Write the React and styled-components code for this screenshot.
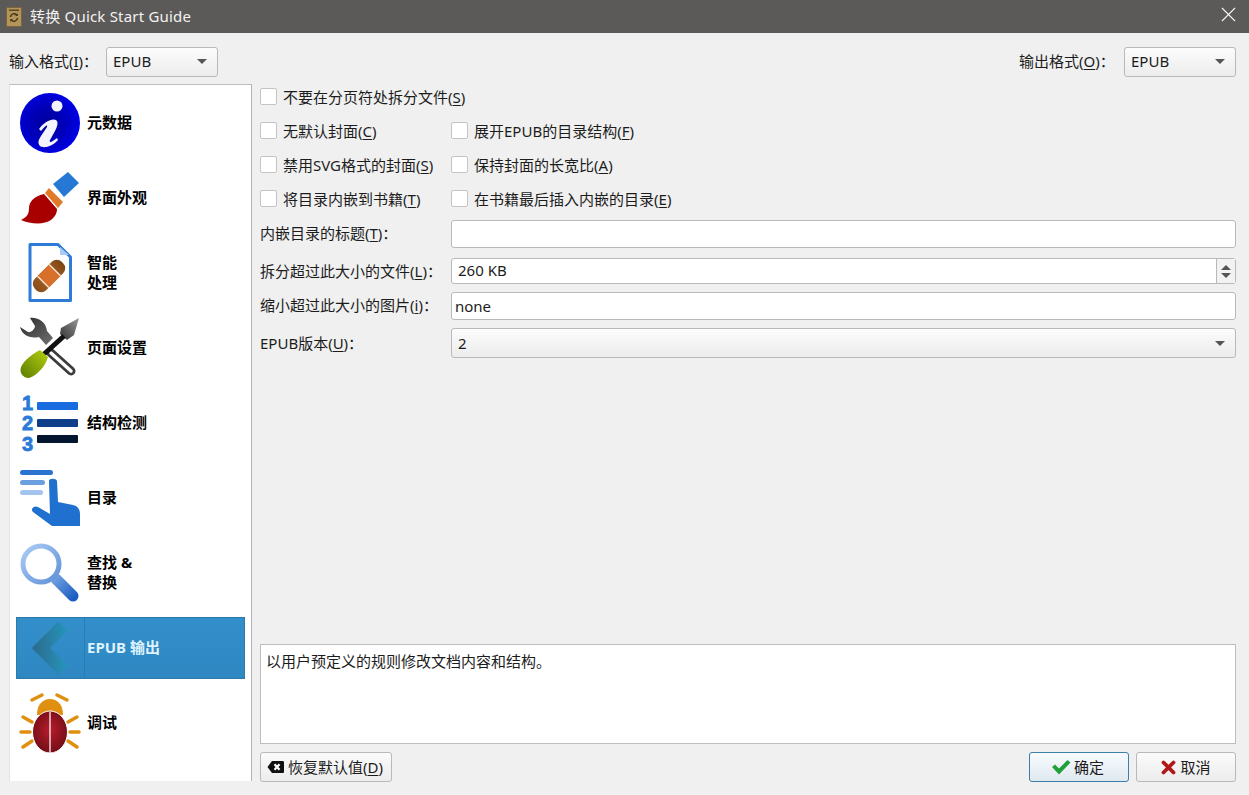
import React from 'react';
import styled, { createGlobalStyle } from 'styled-components';
import { X } from 'lucide-react';

const GlobalStyle = createGlobalStyle`
  html, body {
    margin: 0;
    padding: 0;
    background: #f0f0f0;
  }
  body {
    font-family: "Noto Sans", "Noto Sans CJK SC", sans-serif;
    font-size: 15px;
    color: #1c1c1c;
  }
  svg {
    overflow: visible;
    display: block;
  }
`;

const Window = styled.div`
  width: 1249px;
  height: 795px;
  display: flex;
  flex-direction: column;
  overflow: hidden;
  background: #f0f0f0;
`;

const TitleBar = styled.div`
  height: 33px;
  flex: none;
  display: flex;
  align-items: center;
  padding: 0 8px 0 6px;
  background: #5c5a58;
  color: #f2f2f2;
  font-size: 15px;
`;

const TitleText = styled.span`
  flex: 1;
  margin-left: 8px;
  letter-spacing: 0.2px;
  line-height: 1;
`;

const CloseIcon = styled(X)`
  margin-top: -5px;
`;

const FormatBar = styled.div`
  height: 30px;
  flex: none;
  margin-top: 14px;
  padding: 0 13px 0 9px;
  display: flex;
  align-items: center;
  justify-content: space-between;
`;

const FormatGroup = styled.div`
  display: flex;
  align-items: center;
`;

const FormatLabel = styled.span`
  width: ${(p) => p.$width};
  margin-top: -4px;
  white-space: nowrap;
`;

const Combo = styled.div`
  box-sizing: border-box;
  width: ${(p) => p.$width || '112px'};
  height: 30px;
  padding: 0 10px ${(p) => (p.$lift ? '2px' : '0')} 6px;
  display: flex;
  align-items: center;
  justify-content: space-between;
  border: 1px solid #b9b9b9;
  border-radius: 3px;
  background: linear-gradient(#fcfcfc, #ececec);
  line-height: 26px;
`;

const ComboArrow = styled.span`
  width: 0;
  height: 0;
  border-left: 5px solid transparent;
  border-right: 5px solid transparent;
  border-top: 5px solid #555;
`;

const Body = styled.div`
  flex: none;
  margin-top: 7px;
  padding-left: 9px;
  display: flex;
`;

const Sidebar = styled.nav`
  box-sizing: border-box;
  width: 243px;
  height: 697px;
  padding: 7px 6px 0 6px;
  display: flex;
  flex-direction: column;
  gap: 13px;
  background: #fff;
  border-top: 1px solid #bdbdbd;
  border-left: 1px solid #e4e4e4;
  border-right: 1px solid #b4b4b4;
`;

const NavItem = styled.div`
  box-sizing: border-box;
  height: 62px;
  flex: none;
  display: flex;
  align-items: center;
  font-weight: 700;
  line-height: 20px;
  color: ${(p) => (p.$active ? '#dff3ff' : '#000')};
  background: ${(p) => (p.$active ? 'linear-gradient(#338fcb, #2e87c1)' : 'transparent')};
  outline: ${(p) => (p.$active ? '1px solid #2c7aa9' : 'none')};
  outline-offset: -1px;
`;

const NavIcon = styled.div`
  box-sizing: border-box;
  width: 69px;
  height: 100%;
  flex: none;
  padding-left: 4px;
  display: flex;
  align-items: center;
  border-right: 1px solid ${(p) => (p.$active ? '#2a7db4' : 'transparent')};
`;

const NavLabel = styled.div`
  margin: -2px 0 0 2px;
`;

const Main = styled.div`
  width: 976px;
  height: 698px;
  margin-left: 8px;
  display: flex;
  flex-direction: column;
`;

const Form = styled.div`
  flex: 1;
  padding-top: 4px;
  display: grid;
  grid-template-columns: 191px 1fr;
  grid-template-rows: 34px 34px 34px 30px 38px 34px 36px 30px;
  align-items: start;
`;

const CheckRow = styled.label`
  display: flex;
  align-items: center;
  height: 17px;
  white-space: nowrap;
  grid-column: ${(p) => (p.$wide ? '1 / -1' : 'auto')};
`;

const CheckBox = styled.span`
  box-sizing: border-box;
  width: 17px;
  height: 17px;
  margin-right: 6px;
  flex: none;
  background: #fff;
  border: 1px solid #c4c4c4;
  border-radius: 2px;
`;

const CheckText = styled.span`
  margin-top: -1px;
`;

const FieldLabel = styled.label`
  line-height: 20px;
  padding-top: ${(p) => p.$top || '3px'};
  white-space: nowrap;
`;

const TextField = styled.input`
  box-sizing: border-box;
  width: 100%;
  height: 28px;
  margin: 0;
  padding: 0 3px;
  display: block;
  background: #fff;
  border: 1px solid #b9b9b9;
  border-radius: 3px;
  outline: none;
  font-family: inherit;
  font-size: 15px;
  color: #1c1c1c;
`;

const SpinWrap = styled.div`
  box-sizing: border-box;
  height: 26px;
  display: flex;
  background: #fff;
  border: 1px solid #b9b9b9;
  border-radius: 3px;
`;

const SpinValue = styled.div`
  flex: 1;
  padding-left: 6px;
  line-height: 23px;
  font-size: 15px;
`;

const SpinButtons = styled.div`
  width: 18px;
  display: flex;
  flex-direction: column;
  align-items: center;
  justify-content: center;
  gap: 3px;
  background: #f2f2f2;
  border-left: 1px solid #b9b9b9;
`;

const SpinArrow = styled.span`
  width: 0;
  height: 0;
  border-left: 5px solid transparent;
  border-right: 5px solid transparent;
  border-${(p) => (p.$up ? 'bottom' : 'top')}: 5px solid #555;
`;

const Description = styled.div`
  box-sizing: border-box;
  height: 100px;
  flex: none;
  padding: 6px 5px;
  line-height: 20px;
  background: #fff;
  border: 1px solid #bdbdbd;
`;

const Footer = styled.div`
  height: 30px;
  flex: none;
  margin-top: 8px;
  display: flex;
  align-items: center;
`;

const Button = styled.button`
  box-sizing: border-box;
  width: ${(p) => p.$width};
  height: 30px;
  margin: 0 0 0 ${(p) => p.$gap || '0'};
  padding: ${(p) => p.$padding || '0'};
  display: flex;
  align-items: center;
  justify-content: ${(p) => (p.$start ? 'flex-start' : 'center')};
  gap: 3px;
  border: 1px solid ${(p) => (p.$primary ? '#3d7fa6' : '#b9b9b9')};
  border-radius: 3px;
  background: ${(p) => (p.$primary ? 'linear-gradient(#f7fbfe, #dfe9f0)' : 'linear-gradient(#fbfbfb, #ececec)')};
  font-family: inherit;
  font-size: 15px;
  color: #1c1c1c;
`;

const ButtonText = styled.span`
  margin-top: -2px;
`;

const Spacer = styled.div`
  flex: 1;
`;

const BookIcon = () => (
  <svg width="16" height="20" viewBox="0 0 16 20">
    <rect x="0.5" y="0.5" width="15" height="19" rx="1" fill="#b3955c" stroke="#7d6536" />
    <rect x="3" y="2.5" width="10" height="1.5" fill="#5c4822" />
    <path d="M4.5 10a3.6 3.6 0 0 1 6.2-2.2M11.5 11a3.6 3.6 0 0 1-6.2 2.2" fill="none" stroke="#47371a" strokeWidth="1.5" />
    <path d="M11.8 6.2V9H9ZM4.2 14.8V12H7Z" fill="#47371a" />
  </svg>
);

const InfoIcon = () => (
  <svg width="60" height="60" viewBox="0 0 60 60">
    <defs>
      <radialGradient id="infoFill" cx="0.45" cy="0.5" r="0.55">
        <stop offset="0" stopColor="#00009a" />
        <stop offset="0.6" stopColor="#0000c0" />
        <stop offset="1" stopColor="#0000e8" />
      </radialGradient>
    </defs>
    <circle cx="30" cy="30" r="30" fill="url(#infoFill)" />
    <circle cx="37" cy="13" r="5.5" fill="#f4f4ff" />
    <path d="M19 36C24 29 32 25 36 27C39 29 37 34 35 38L30 47C29 50 31 50 37 45L38 47C33 53 24 56 20 53C17 50 19 46 21 43L27 34C28 31 25 33 21 38Z" fill="#f4f4ff" />
  </svg>
);

const BrushIcon = () => (
  <svg width="60" height="60" viewBox="0 0 60 60">
    <polygon points="48,4 59,15 44,29 33,16" fill="#2678d4" />
    <polygon points="29,20 43,34 38,40 25,25" fill="#e07a28" />
    <path d="M24 26C14 28 9 34 9 40C9 46 7 49 1 52C10 56 24 57 31 52C36 48 37 44 37 41Z" fill="#a80000" />
  </svg>
);

const PatchIcon = () => (
  <svg width="60" height="60" viewBox="0 0 60 60">
    <defs>
      <linearGradient id="bandFill" x1="0" y1="0" x2="1" y2="0">
        <stop offset="0" stopColor="#8a4c18" />
        <stop offset="0.5" stopColor="#a8642a" />
        <stop offset="1" stopColor="#7c4414" />
      </linearGradient>
    </defs>
    <path d="M10 1.5H38L50.5 14V57.5H10Z" fill="#fff" stroke="#2e7cd8" strokeWidth="3" strokeLinejoin="round" />
    <path d="M40 4V12H49Z" fill="#a8ccf4" />
    <g transform="rotate(-45 29 33)">
      <rect x="10" y="25" width="38" height="16" rx="7" fill="url(#bandFill)" />
      <rect x="21" y="25" width="16" height="16" fill="#d8702c" />
      <rect x="20" y="25" width="1.4" height="16" fill="#fbe8d4" />
      <rect x="36.6" y="25" width="1.4" height="16" fill="#fbe8d4" />
    </g>
  </svg>
);

const ToolsIcon = () => (
  <svg width="60" height="60" viewBox="0 0 60 60">
    <defs>
      <linearGradient id="wrenchFill" x1="0" y1="0" x2="1" y2="1">
        <stop offset="0" stopColor="#2c2c2c" />
        <stop offset="1" stopColor="#707070" />
      </linearGradient>
      <linearGradient id="handleFill" x1="0" y1="1" x2="1" y2="0">
        <stop offset="0" stopColor="#5c7c00" />
        <stop offset="1" stopColor="#b4d010" />
      </linearGradient>
      <linearGradient id="tipFill" x1="0" y1="1" x2="1" y2="0">
        <stop offset="0" stopColor="#303030" />
        <stop offset="1" stopColor="#9a9a9a" />
      </linearGradient>
    </defs>
    <path d="M10 0C18 -1 26 4 27 13L33 20L26 27L19 19C10 21 2 17 0 9L8 14C11 15 15 11 15 8Z" fill="url(#wrenchFill)" />
    <line x1="31" y1="35" x2="51" y2="53" stroke="#3c3c3c" strokeWidth="9" strokeLinecap="round" />
    <line x1="31" y1="35" x2="51" y2="53" stroke="#fff" strokeWidth="3.5" strokeLinecap="round" />
    <polygon points="41,10 59,0 54,17 47,22 40,16" fill="url(#tipFill)" />
    <line x1="44" y1="18" x2="23" y2="37" stroke="#111" strokeWidth="5" />
    <path d="M20 32L28 39C26 47 17 58 9 60C3 60 -1 55 1 49C4 42 14 35 20 32Z" fill="url(#handleFill)" />
  </svg>
);

const ListNumber = styled.text`
  font-family: "Liberation Sans", sans-serif;
  font-size: 20px;
  font-weight: 700;
  fill: #2a7ad8;
  stroke: #2a7ad8;
  stroke-width: 0.8px;
`;

const ListIcon = () => (
  <svg width="60" height="60" viewBox="0 0 60 60">
    <ListNumber x="2" y="17">1</ListNumber>
    <ListNumber x="2" y="37">2</ListNumber>
    <ListNumber x="2" y="58">3</ListNumber>
    <rect x="17" y="9" width="41" height="8" rx="1" fill="#196be0" />
    <rect x="17" y="26" width="41" height="8" rx="1" fill="#0f3f88" />
    <rect x="17" y="42" width="41" height="8" rx="1" fill="#04152f" />
  </svg>
);

const TouchIcon = () => (
  <svg width="60" height="60" viewBox="0 0 60 60">
    <rect x="0" y="2" width="33" height="5" rx="2.5" fill="#2a74d0" />
    <rect x="0" y="12" width="25" height="5" rx="2.5" fill="#6c9fe0" />
    <rect x="0" y="22" width="23" height="5" rx="2.5" fill="#a4c4ee" />
    <path d="M29 13C29 10 36 10 37 13L38 34L53 37C58 38 60 42 60 46V58H32L13 44C10 41 14 37 18 39L30 46Z" fill="#2070d0" />
  </svg>
);

const SearchIcon = () => (
  <svg width="60" height="60" viewBox="0 0 60 60">
    <defs>
      <linearGradient id="lensStroke" x1="0" y1="0" x2="1" y2="1">
        <stop offset="0" stopColor="#acccf4" />
        <stop offset="1" stopColor="#5f90d8" />
      </linearGradient>
      <linearGradient id="lensHandle" gradientUnits="userSpaceOnUse" x1="36" y1="36" x2="55" y2="55">
        <stop offset="0" stopColor="#6c9ce0" />
        <stop offset="1" stopColor="#1a5cc0" />
      </linearGradient>
    </defs>
    <path d="M36 36L53 53" stroke="url(#lensHandle)" strokeWidth="11" strokeLinecap="round" fill="none" />
    <circle cx="21" cy="21" r="18" fill="#fff" stroke="url(#lensStroke)" strokeWidth="5" />
  </svg>
);

const BackIcon = () => (
  <svg width="60" height="60" viewBox="0 0 60 60">
    <defs>
      <linearGradient id="backFill" gradientUnits="userSpaceOnUse" x1="12" y1="30" x2="48" y2="30">
        <stop offset="0" stopColor="#2b6a8c" />
        <stop offset="1" stopColor="#2596bc" />
      </linearGradient>
    </defs>
    <path d="M43 8L21 30L43 52" fill="none" stroke="url(#backFill)" strokeWidth="13" />
  </svg>
);

const BugIcon = () => (
  <svg width="60" height="60" viewBox="0 0 60 60">
    <defs>
      <radialGradient id="bugFill" cx="0.5" cy="0.45" r="0.6">
        <stop offset="0" stopColor="#b81c2c" />
        <stop offset="1" stopColor="#6c0c14" />
      </radialGradient>
    </defs>
    <g stroke="#e09010" strokeWidth="3.5" strokeLinecap="round" fill="none">
      <path d="M12 7L22 2" />
      <path d="M37 2L47 7" />
      <path d="M3 24L12 29" />
      <path d="M48 29L57 24" />
      <path d="M1 39H10" />
      <path d="M50 39H59" />
      <path d="M3 54L12 48" />
      <path d="M48 48L57 54" />
    </g>
    <path d="M17 22C17 11 23 6 30 6C37 6 43 11 43 22Z" fill="#e09010" />
    <ellipse cx="30" cy="39" rx="17.5" ry="21" fill="url(#bugFill)" stroke="#fff" strokeWidth="1" />
    <line x1="30" y1="19" x2="30" y2="60" stroke="#f4e4e4" strokeWidth="1.4" />
  </svg>
);

const ClearIcon = () => (
  <svg width="18" height="14" viewBox="0 0 18 14">
    <path d="M5 1H15.5C16.5 1 17 1.5 17 2.5V11.5C17 12.5 16.5 13 15.5 13H5L0.5 7Z" fill="#111" />
    <path d="M7.5 4.2L12.5 9.8M12.5 4.2L7.5 9.8" stroke="#fff" strokeWidth="2.2" />
  </svg>
);

const CheckIcon = () => (
  <svg width="20" height="16" viewBox="0 0 20 16">
    <path d="M1 8L4 5.5L8 9.5L16.5 1L19.5 3.5L8 15.5Z" fill="#22a038" />
  </svg>
);

const CrossIcon = () => (
  <svg width="16" height="15" viewBox="0 0 16 15">
    <path d="M2.5 2.5L12.5 12.5M12.5 2.5L2.5 12.5" stroke="#b01818" strokeWidth="3.8" strokeLinecap="round" />
  </svg>
);

const Key = styled.span`
  text-decoration: underline;
  text-underline-offset: 2px;
`;

const navItems = [
  { label: ['元数据'], icon: <InfoIcon /> },
  { label: ['界面外观'], icon: <BrushIcon /> },
  { label: ['智能', '处理'], icon: <PatchIcon /> },
  { label: ['页面设置'], icon: <ToolsIcon /> },
  { label: ['结构检测'], icon: <ListIcon /> },
  { label: ['目录'], icon: <TouchIcon /> },
  { label: ['查找 &', '替换'], icon: <SearchIcon /> },
  { label: ['EPUB 输出'], icon: <BackIcon />, active: true },
  { label: ['调试'], icon: <BugIcon /> },
];

const Check = ({ text, k, wide }) => (
  <CheckRow $wide={wide}>
    <CheckBox />
    <CheckText>{text}(<Key>{k}</Key>)</CheckText>
  </CheckRow>
);

const App = () => (
  <Window>
    <GlobalStyle />
    <TitleBar>
      <BookIcon />
      <TitleText>转换 Quick Start Guide</TitleText>
      <CloseIcon size={25} strokeWidth={1.1} color="#f5f5f5" />
    </TitleBar>
    <FormatBar>
      <FormatGroup>
        <FormatLabel $width="97px">输入格式(<Key>I</Key>)：</FormatLabel>
        <Combo $lift>EPUB<ComboArrow /></Combo>
      </FormatGroup>
      <FormatGroup>
        <FormatLabel $width="105px">输出格式(<Key>O</Key>)：</FormatLabel>
        <Combo $lift>EPUB<ComboArrow /></Combo>
      </FormatGroup>
    </FormatBar>
    <Body>
      <Sidebar>
        {navItems.map((item) => (
          <NavItem key={item.label[0]} $active={item.active}>
            <NavIcon $active={item.active}>{item.icon}</NavIcon>
            <NavLabel>
              {item.label.map((line) => <div key={line}>{line}</div>)}
            </NavLabel>
          </NavItem>
        ))}
      </Sidebar>
      <Main>
        <Form>
          <Check wide text="不要在分页符处拆分文件" k="S" />
          <Check text="无默认封面" k="C" />
          <Check text="展开EPUB的目录结构" k="F" />
          <Check text="禁用SVG格式的封面" k="S" />
          <Check text="保持封面的长宽比" k="A" />
          <Check text="将目录内嵌到书籍" k="T" />
          <Check text="在书籍最后插入内嵌的目录" k="E" />
          <FieldLabel>内嵌目录的标题(<Key>T</Key>)：</FieldLabel>
          <TextField readOnly value="" />
          <FieldLabel>拆分超过此大小的文件(<Key>L</Key>)：</FieldLabel>
          <SpinWrap>
            <SpinValue>260 KB</SpinValue>
            <SpinButtons>
              <SpinArrow $up />
              <SpinArrow />
            </SpinButtons>
          </SpinWrap>
          <FieldLabel>缩小超过此大小的图片(<Key>i</Key>)：</FieldLabel>
          <TextField readOnly value="none" />
          <FieldLabel $top="5px">EPUB版本(<Key>U</Key>)：</FieldLabel>
          <Combo $width="100%">2<ComboArrow /></Combo>
        </Form>
        <Description>以用户预定义的规则修改文档内容和结构。</Description>
        <Footer>
          <Button $width="132px" $start $padding="0 0 0 6px"><ClearIcon /><ButtonText>恢复默认值(<Key>D</Key>)</ButtonText></Button>
          <Spacer />
          <Button $width="100px" $primary $padding="0 3px 0 0"><CheckIcon /><ButtonText>确定</ButtonText></Button>
          <Button $width="100px" $gap="7px"><CrossIcon /><ButtonText>取消</ButtonText></Button>
        </Footer>
      </Main>
    </Body>
  </Window>
);

export default App;
